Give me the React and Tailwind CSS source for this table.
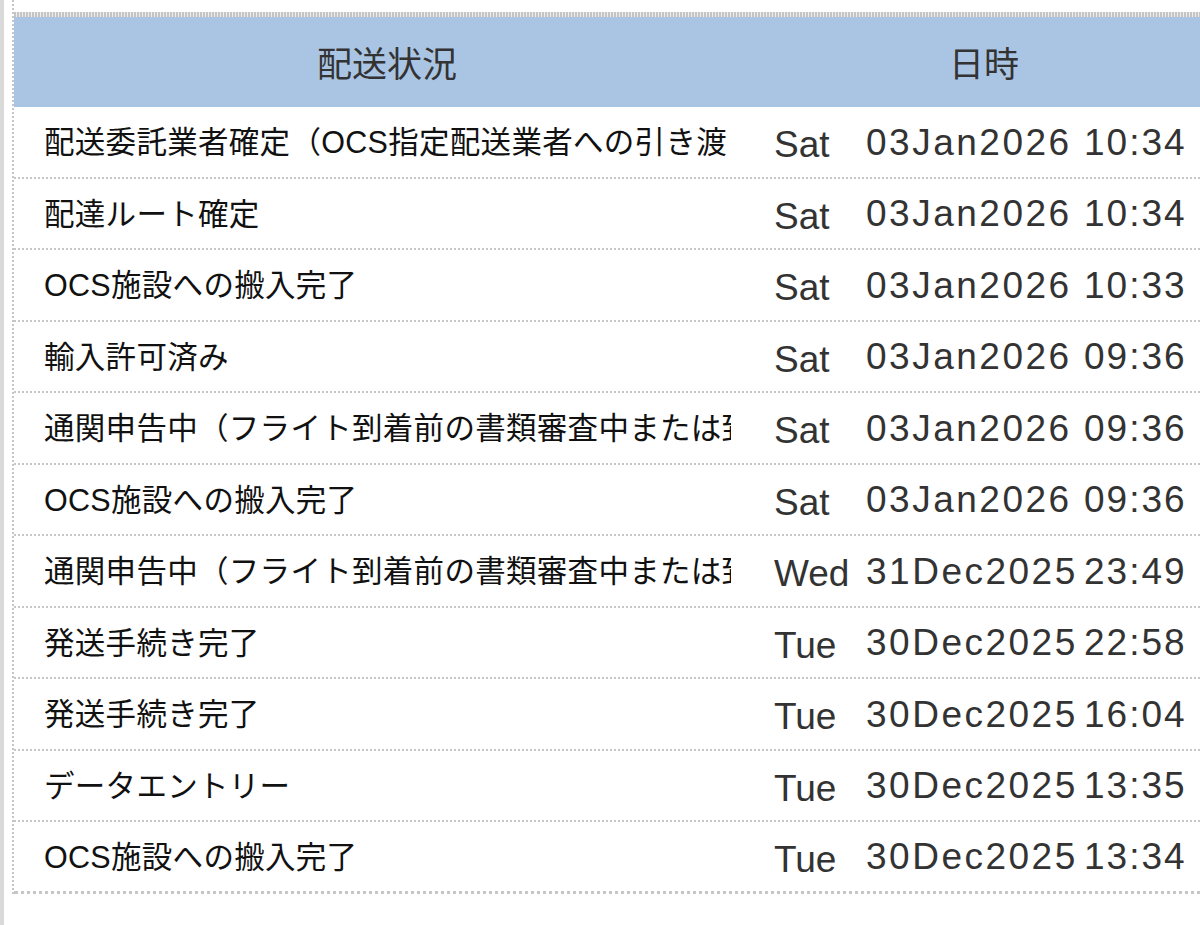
const rows = [
  { status: '配送委託業者確定（OCS指定配送業者への引き渡し完了）', day: 'Sat', date: '03Jan2026', time: '10:34' },
  { status: '配達ルート確定', day: 'Sat', date: '03Jan2026', time: '10:34' },
  { status: 'OCS施設への搬入完了', day: 'Sat', date: '03Jan2026', time: '10:33' },
  { status: '輸入許可済み', day: 'Sat', date: '03Jan2026', time: '09:36' },
  { status: '通関申告中（フライト到着前の書類審査中または到着後の審査中）', day: 'Sat', date: '03Jan2026', time: '09:36' },
  { status: 'OCS施設への搬入完了', day: 'Sat', date: '03Jan2026', time: '09:36' },
  { status: '通関申告中（フライト到着前の書類審査中または到着後の審査中）', day: 'Wed', date: '31Dec2025', time: '23:49' },
  { status: '発送手続き完了', day: 'Tue', date: '30Dec2025', time: '22:58' },
  { status: '発送手続き完了', day: 'Tue', date: '30Dec2025', time: '16:04' },
  { status: 'データエントリー', day: 'Tue', date: '30Dec2025', time: '13:35' },
  { status: 'OCS施設への搬入完了', day: 'Tue', date: '30Dec2025', time: '13:34' },
];

const jp = "font-['Noto_Sans_CJK_JP','Noto_Sans',sans-serif]";
const latin = "font-['Liberation_Sans','Noto_Sans_CJK_JP',sans-serif]";

const App = () => {
  return (
    <div className="flex min-h-[925px] w-[1200px] overflow-hidden bg-white">
      <div className="w-[4px] shrink-0 bg-[#d9d9d9]" />
      <div className="ml-[8px] self-start border-l-2 border-dotted border-[#c6c6c6] pt-[12px]">
        <div className="h-[5px] w-[1194px] bg-[repeating-linear-gradient(90deg,#c4c4c4_0_2px,#eeeeee_2px_3px)]" />

        <div className={`grid h-[90px] w-[1194px] grid-cols-[746px_448px] items-center bg-[#aac5e4] text-[35px] text-[#333] ${jp}`}>
          <div className="text-center">配送状況</div>
          <div className="text-center">日時</div>
        </div>

        {rows.map((r, i) => (
          <div
            key={i}
            className={`grid h-[71.5px] w-[1194px] grid-cols-[746px_106px_218px_124px] items-center border-dotted border-[#c6c6c6] ${
              i === rows.length - 1 ? 'border-b-[3px]' : 'border-b-2'
            }`}
          >
            <div className="pl-[30px] pr-[29px] pt-[3px]">
              <div className={`overflow-hidden whitespace-nowrap text-[30.5px] tracking-[0.3px] text-[#111] [text-spacing-trim:space-all] ${latin}`}>
                {r.status}
              </div>
            </div>
            <div className={`pl-[14px] pt-[6px] text-[37px] text-[#333] ${latin}`}>{r.day}</div>
            <div className={`whitespace-nowrap pt-[1px] text-[37px] tracking-[2.5px] text-[#333] ${latin}`}>{r.date}</div>
            <div className={`whitespace-nowrap pt-[1px] text-[37px] tracking-[2px] text-[#333] ${latin}`}>{r.time}</div>
          </div>
        ))}
      </div>
    </div>
  );
};

export default App;
